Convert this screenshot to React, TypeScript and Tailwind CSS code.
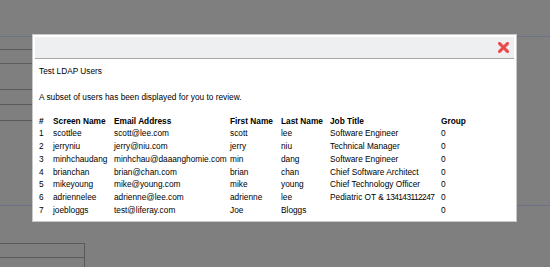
import React from "react";

const users = [
  { id: 1, screen: "scottlee", email: "scott@lee.com", first: "scott", last: "lee", job: "Software Engineer", group: "0" },
  { id: 2, screen: "jerryniu", email: "jerry@niu.com", first: "jerry", last: "niu", job: "Technical Manager", group: "0" },
  { id: 3, screen: "minhchaudang", email: "minhchau@daaanghomie.com", first: "min", last: "dang", job: "Software Engineer", group: "0" },
  { id: 4, screen: "brianchan", email: "brian@chan.com", first: "brian", last: "chan", job: "Chief Software Architect", group: "0" },
  { id: 5, screen: "mikeyoung", email: "mike@young.com", first: "mike", last: "young", job: "Chief Technology Officer", group: "0" },
  { id: 6, screen: "adriennelee", email: "adrienne@lee.com", first: "adrienne", last: "lee", job: "Pediatric OT & 134143112247", group: "0" },
  { id: 7, screen: "joebloggs", email: "test@liferay.com", first: "Joe", last: "Bloggs", job: "", group: "0" },
];

const cols = "grid grid-cols-[14px_61px_116px_51px_49px_111px_1fr] leading-[12.75px]";

// digits in the original font are narrower, so squeeze runs of numbers a bit
function JobTitle({ text }: { text: string }) {
  const parts = text.split(/(\d+)/);
  return (
    <div className="whitespace-nowrap">
      {parts.map((p, i) =>
        /^\d+$/.test(p) ? (
          <span key={i} className="tracking-[-0.55px]">{p}</span>
        ) : (
          <span key={i}>{p}</span>
        )
      )}
    </div>
  );
}

function CloseIcon() {
  return (
    <svg width="11" height="11" viewBox="0 0 11 11">
      <path d="M1.5 1.5 L9.5 9.5 M9.5 1.5 L1.5 9.5" stroke="#f2a0a0" strokeWidth="3.6" strokeLinecap="square" />
      <path d="M1.5 1.5 L9.5 9.5 M9.5 1.5 L1.5 9.5" stroke="#e84848" strokeWidth="2.6" strokeLinecap="square" />
    </svg>
  );
}

export default function App() {
  return (
    <div className="relative w-[550px] h-[267px] overflow-hidden bg-[#7f7f7f] font-['Liberation_Sans',Arial,sans-serif]">
      {/* page behind the overlay */}
      <div className="h-[36px]" />
      <div className="h-[170px] border-t border-b border-[#6b7286]">
        <div className="w-[40px] flex flex-col">
          <div className="h-[13px] border-b border-[#595959]" />
          <div className="h-[14px] border-b border-[#5e5e5e]" />
          <div className="h-[26px] border-b border-[#595959]" />
          <div className="h-[15px] border-b border-[#595959]" />
          <div className="h-[16px] border-b border-[#595959]" />
        </div>
      </div>
      <div className="h-[37px]" />
      <div className="w-[85px] border-r border-[#595959]">
        <div className="h-[15px] border-t border-b border-[#595959]" />
        <div className="h-[10px]" />
      </div>

      {/* dialog */}
      <div className="absolute left-[32px] top-[34px] w-[485px] h-[188px] bg-white border border-[#c8c8c8] text-[8.3px] text-black">
        <div className="mx-[2px] mt-[2px] h-[22px] bg-[#eeeff0] border-b border-[#a9a9a9] flex items-center justify-end pr-[5px]">
          <CloseIcon />
        </div>
        <div className="pl-[6px]">
          <div className="mt-[6px] leading-[12.75px]">Test LDAP Users</div>
          <div className="mt-[13px] leading-[12.75px]">A subset of users has been displayed for you to review.</div>
          <div className={`${cols} mt-[11px] font-bold`}>
            <div>#</div>
            <div>Screen Name</div>
            <div>Email Address</div>
            <div>First Name</div>
            <div>Last Name</div>
            <div>Job Title</div>
            <div>Group</div>
          </div>
          {users.map((u) => (
            <div key={u.id} className={cols}>
              <div>{u.id}</div>
              <div>{u.screen}</div>
              <div>{u.email}</div>
              <div>{u.first}</div>
              <div>{u.last}</div>
              <JobTitle text={u.job} />
              <div>{u.group}</div>
            </div>
          ))}
        </div>
      </div>
    </div>
  );
}
